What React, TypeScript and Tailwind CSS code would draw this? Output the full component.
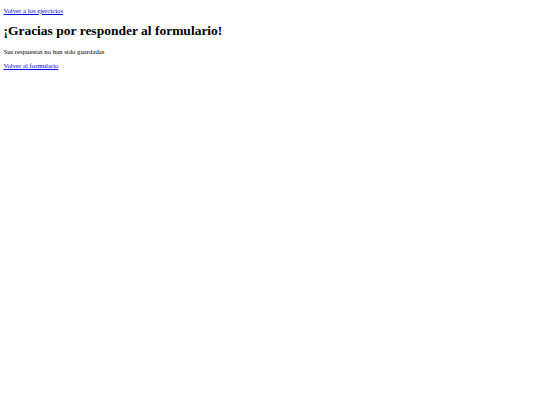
export default function App() {
  return (
    <div className="min-h-screen bg-white px-[3.4px] pt-[5.5px] text-[6.75px] text-black [font-family:'Liberation_Serif',serif]">
      <a href="#" className="text-[#0000ee] underline">
        Volver a los ejercicios
      </a>
      <h1 className="mt-[7px] mb-[9px] text-[13.5px] font-bold leading-[1.15]">¡Gracias por responder al formulario!</h1>
      <p className="mt-[6.75px] mb-[4px]">Sus respuestas no han sido guardadas</p>
      <a href="#" className="text-[#0000ee] underline">
        Volver al formulario
      </a>
    </div>
  );
}
